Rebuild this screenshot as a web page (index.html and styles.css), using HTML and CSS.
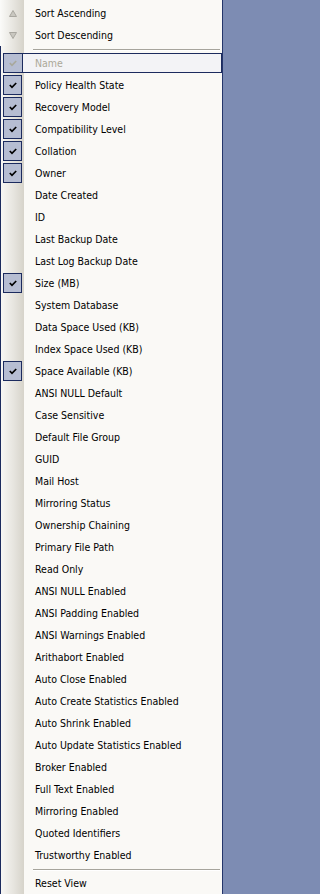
FILE: index.html
```html
<!DOCTYPE html>
<html>
<head>
<meta charset="utf-8">
<link rel="stylesheet" href="styles.css">
</head>
<body>
<div class="menu">
  <div class="top">
    <div class="row">
      <span class="icon"><svg width="8" height="7" viewBox="0 0 8 7"><path d="M4 0.5 L7.5 6.5 L0.5 6.5 Z" fill="#c9c7c0" stroke="#a9a7a0" stroke-width="1"/></svg></span>
      <span class="label">Sort Ascending</span>
    </div>
    <div class="row">
      <span class="icon"><svg width="8" height="7" viewBox="0 0 8 7"><path d="M0.5 0.5 L7.5 0.5 L4 6.5 Z" fill="#c9c7c0" stroke="#a9a7a0" stroke-width="1"/></svg></span>
      <span class="label">Sort Descending</span>
    </div>
  </div>
  <div class="lower">
    <div class="sep"></div>
    <div class="row">
      <div class="hl">
        <span class="hlcheck"><svg width="8" height="7" viewBox="0 0 8 7"><polyline points="0.8,3 3,5.3 7.2,1" fill="none" stroke="#a8a89c" stroke-width="1.7"/></svg></span>
        <span class="label dis">Name</span>
      </div>
    </div>
    <div class="row"><span class="check"><svg width="8" height="7" viewBox="0 0 8 7"><polyline points="0.8,3 3,5.3 7.2,1" fill="none" stroke="#000" stroke-width="1.7"/></svg></span><span class="label">Policy Health State</span></div>
    <div class="row"><span class="check"><svg width="8" height="7" viewBox="0 0 8 7"><polyline points="0.8,3 3,5.3 7.2,1" fill="none" stroke="#000" stroke-width="1.7"/></svg></span><span class="label">Recovery Model</span></div>
    <div class="row"><span class="check"><svg width="8" height="7" viewBox="0 0 8 7"><polyline points="0.8,3 3,5.3 7.2,1" fill="none" stroke="#000" stroke-width="1.7"/></svg></span><span class="label">Compatibility Level</span></div>
    <div class="row"><span class="check"><svg width="8" height="7" viewBox="0 0 8 7"><polyline points="0.8,3 3,5.3 7.2,1" fill="none" stroke="#000" stroke-width="1.7"/></svg></span><span class="label">Collation</span></div>
    <div class="row"><span class="check"><svg width="8" height="7" viewBox="0 0 8 7"><polyline points="0.8,3 3,5.3 7.2,1" fill="none" stroke="#000" stroke-width="1.7"/></svg></span><span class="label">Owner</span></div>
    <div class="row"><span class="nocheck"></span><span class="label">Date Created</span></div>
    <div class="row"><span class="nocheck"></span><span class="label">ID</span></div>
    <div class="row"><span class="nocheck"></span><span class="label">Last Backup Date</span></div>
    <div class="row"><span class="nocheck"></span><span class="label">Last Log Backup Date</span></div>
    <div class="row"><span class="check"><svg width="8" height="7" viewBox="0 0 8 7"><polyline points="0.8,3 3,5.3 7.2,1" fill="none" stroke="#000" stroke-width="1.7"/></svg></span><span class="label">Size (MB)</span></div>
    <div class="row"><span class="nocheck"></span><span class="label">System Database</span></div>
    <div class="row"><span class="nocheck"></span><span class="label">Data Space Used (KB)</span></div>
    <div class="row"><span class="nocheck"></span><span class="label">Index Space Used (KB)</span></div>
    <div class="row"><span class="check"><svg width="8" height="7" viewBox="0 0 8 7"><polyline points="0.8,3 3,5.3 7.2,1" fill="none" stroke="#000" stroke-width="1.7"/></svg></span><span class="label">Space Available (KB)</span></div>
    <div class="row"><span class="nocheck"></span><span class="label">ANSI NULL Default</span></div>
    <div class="row"><span class="nocheck"></span><span class="label">Case Sensitive</span></div>
    <div class="row"><span class="nocheck"></span><span class="label">Default File Group</span></div>
    <div class="row"><span class="nocheck"></span><span class="label">GUID</span></div>
    <div class="row"><span class="nocheck"></span><span class="label">Mail Host</span></div>
    <div class="row"><span class="nocheck"></span><span class="label">Mirroring Status</span></div>
    <div class="row"><span class="nocheck"></span><span class="label">Ownership Chaining</span></div>
    <div class="row"><span class="nocheck"></span><span class="label">Primary File Path</span></div>
    <div class="row"><span class="nocheck"></span><span class="label">Read Only</span></div>
    <div class="row"><span class="nocheck"></span><span class="label">ANSI NULL Enabled</span></div>
    <div class="row"><span class="nocheck"></span><span class="label">ANSI Padding Enabled</span></div>
    <div class="row"><span class="nocheck"></span><span class="label">ANSI Warnings Enabled</span></div>
    <div class="row"><span class="nocheck"></span><span class="label">Arithabort Enabled</span></div>
    <div class="row"><span class="nocheck"></span><span class="label">Auto Close Enabled</span></div>
    <div class="row"><span class="nocheck"></span><span class="label">Auto Create Statistics Enabled</span></div>
    <div class="row"><span class="nocheck"></span><span class="label">Auto Shrink Enabled</span></div>
    <div class="row"><span class="nocheck"></span><span class="label">Auto Update Statistics Enabled</span></div>
    <div class="row"><span class="nocheck"></span><span class="label">Broker Enabled</span></div>
    <div class="row"><span class="nocheck"></span><span class="label">Full Text Enabled</span></div>
    <div class="row"><span class="nocheck"></span><span class="label">Mirroring Enabled</span></div>
    <div class="row"><span class="nocheck"></span><span class="label">Quoted Identifiers</span></div>
    <div class="row"><span class="nocheck"></span><span class="label">Trustworthy Enabled</span></div>
    <div class="sep"></div>
    <div class="row"><span class="nocheck"></span><span class="label">Reset View</span></div>
  </div>
</div>
</body>
</html>
```

FILE: styles.css
```css
html, body {
  margin: 0;
  padding: 0;
  background: #7d8cb3;
}
body {
  width: 224px;
  height: 894px;
  overflow: hidden;
  font-family: "DejaVu Sans Condensed", "DejaVu Sans", sans-serif;
  font-stretch: condensed;
  font-size: 10.5px;
  color: #000;
}
.menu {
  width: 222px;
  height: 894px;
  border-right: 1px solid #24356a;
  background: #faf9f6;
}
.top {
  padding-top: 2px;
  background: linear-gradient(to right, #fbfbf9 0, #e6e4de 14px, #d6d3ca 24px, #faf9f6 24px);
}
.lower {
  background: linear-gradient(to right, #1c2b5e 0, #1c2b5e 1px, #f8f7f4 1px, #e6e4de 14px, #d6d3ca 24px, #faf9f6 24px);
  padding-bottom: 4px;
}
.row {
  display: flex;
  align-items: center;
  height: 22px;
  padding-left: 3px;
}
.icon {
  width: 19px;
  display: flex;
  justify-content: center;
  align-items: center;
  padding-left: 1px;
  box-sizing: border-box;
}
.icon svg, .check svg, .hlcheck svg { display: block; }
.check, .nocheck {
  width: 19px;
  height: 20px;
  box-sizing: border-box;
  flex: none;
}
.check {
  border: 1px solid #1c2b5e;
  background: #b6bdd2;
  display: flex;
  align-items: center;
  justify-content: center;
}
.label {
  margin-left: 13px;
  white-space: nowrap;
  line-height: 22px;
}
.dis { color: #aca899; }
.hl {
  display: flex;
  align-items: center;
  flex: 1;
  height: 20px;
  box-sizing: border-box;
  border: 1px solid #1c2b5e;
  background: #f3f3f6;
}
.hlcheck {
  width: 18px;
  height: 18px;
  border-right: 1px solid #1c2b5e;
  background: #b6bdd2;
  display: flex;
  align-items: center;
  justify-content: center;
  flex: none;
}
.hl .label { margin-left: 12px; line-height: 18px; }
.sep {
  height: 6px;
  margin-left: 33px;
  margin-right: 2px;
  background: linear-gradient(to bottom, transparent 0, transparent 3px, #a6a49c 3px, #a6a49c 4px, #ffffff 4px, #ffffff 5px, transparent 5px);
}
```
